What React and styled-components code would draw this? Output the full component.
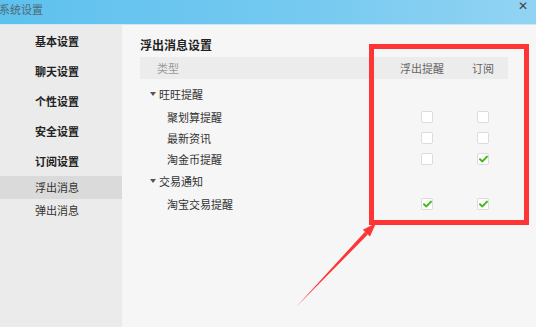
import React from 'react';
import styled, { createGlobalStyle } from 'styled-components';

const Global = createGlobalStyle`
  html, body { margin: 0; padding: 0; }
  body {
    font-family: "Noto Sans CJK SC", "Noto Sans", sans-serif;
    background: #f6f6f6;
  }
`;

const Window = styled.div`
  position: relative;
  width: 536px;
  height: 327px;
  overflow: hidden;
  display: flex;
  flex-direction: column;
  background: #f6f6f6;
`;

const TitleBar = styled.div`
  height: 24px;
  flex: none;
  display: flex;
  align-items: flex-start;
  justify-content: space-between;
  background: linear-gradient(90deg, #5ec1ee 0%, #74c9f0 55%, #92d3f3 100%);
  border-bottom: 1px solid #c9e9f8;
`;

const Title = styled.span`
  font-size: 11px;
  line-height: 18px;
  color: #4e6a7a;
  margin-left: -1px;
`;

const Close = styled.span`
  font-family: "DejaVu Sans", sans-serif;
  font-size: 12px;
  font-weight: bold;
  line-height: 13px;
  color: #444;
  margin-right: 8px;
`;

const Body = styled.div`
  flex: 1;
  display: flex;
`;

const Sidebar = styled.div`
  width: 122px;
  flex: none;
  background: #ebebeb;
  padding-top: 1px;
`;

const NavItem = styled.div`
  height: ${p => (p.$small ? 23 : 30)}px;
  line-height: ${p => (p.$small ? 23 : 30)}px;
  padding-left: 35px;
  font-size: 11px;
  font-weight: ${p => (p.$bold ? 700 : 400)};
  color: ${p => (p.$bold ? '#222' : '#333')};
  background: ${p => (p.$active ? '#dadada' : 'transparent')};
`;

const Main = styled.div`
  flex: 1;
  padding: 11px 28px 0 18px;
`;

const SectionTitle = styled.div`
  font-size: 12px;
  font-weight: 700;
  color: #222;
  line-height: 17px;
  margin-bottom: 4px;
`;

const Row = styled.div`
  display: grid;
  grid-template-columns: 1fr 62px 50px;
  align-items: center;
  height: ${p => p.$h}px;
  margin-top: ${p => p.$mt || 0}px;
`;

const Header = styled(Row)`
  background: #ececec;
  color: #9a9a9a;
  font-size: 11px;
  padding-left: 17px;
`;

const HeadCell = styled.span`
  text-align: center;
  color: #666;
  margin-left: ${p => p.$shift || 0}px;
`;

const Tree = styled.div`
  padding-top: 3px;
`;

const Label = styled.span`
  font-size: 11px;
  color: #333;
  padding-left: ${p => p.$indent}px;
  display: flex;
  align-items: center;
`;

const Caret = styled.span`
  width: 0;
  height: 0;
  border-left: 3px solid transparent;
  border-right: 3px solid transparent;
  border-top: 4px solid #555;
  margin-right: 3px;
  margin-left: -8px;
`;

const Cell = styled.div`
  display: flex;
  justify-content: center;
`;

const Box = styled.span`
  width: 12px;
  height: 12px;
  box-sizing: border-box;
  border: 1px solid #dcdcdc;
  border-radius: 2px;
  background: #fff;
  display: flex;
  align-items: center;
  justify-content: center;
`;

const Highlight = styled.div`
  position: absolute;
  left: 369px;
  top: 44px;
  width: 160px;
  height: 181px;
  box-sizing: border-box;
  border: 5px solid #ff3535;
  pointer-events: none;
`;

const ArrowLayer = styled.svg`
  position: absolute;
  left: 0;
  top: 0;
  pointer-events: none;
`;

const Check = ({ on }) => (
  <Box>
    {on && (
      <svg width="9" height="8" viewBox="0 0 9 8">
        <path d="M1 4.2 L3.4 6.4 L8 1.6" fill="none" stroke="#43b81d" strokeWidth="2" strokeLinecap="round" strokeLinejoin="round" />
      </svg>
    )}
  </Box>
);

const groups = [
  {
    name: '旺旺提醒',
    mt: 0,
    items: [
      { name: '聚划算提醒', a: false, b: false },
      { name: '最新资讯', a: false, b: false },
      { name: '淘金币提醒', a: false, b: true },
    ],
  },
  {
    name: '交易通知',
    mt: 0,
    items: [{ name: '淘宝交易提醒', a: true, b: true }],
  },
];

const nav = [
  { name: '基本设置', bold: true },
  { name: '聊天设置', bold: true },
  { name: '个性设置', bold: true },
  { name: '安全设置', bold: true },
  { name: '订阅设置', bold: true },
  { name: '浮出消息', small: true, active: true },
  { name: '弹出消息', small: true },
];

export default function App() {
  return (
    <Window>
      <Global />
      <TitleBar>
        <Title>系统设置</Title>
        <Close>✕</Close>
      </TitleBar>
      <Body>
        <Sidebar>
          {nav.map(n => (
            <NavItem key={n.name} $bold={n.bold} $small={n.small} $active={n.active}>
              {n.name}
            </NavItem>
          ))}
        </Sidebar>
        <Main>
          <SectionTitle>浮出消息设置</SectionTitle>
          <Header $h={22}>
            <span>类型</span>
            <HeadCell $shift={-10}>浮出提醒</HeadCell>
            <HeadCell>订阅</HeadCell>
          </Header>
          <Tree>
            {groups.map(g => (
              <React.Fragment key={g.name}>
                <Row $h={24} $mt={g.mt}>
                  <Label $indent={18}>
                    <Caret />
                    {g.name}
                  </Label>
                </Row>
                {g.items.map(it => (
                  <Row key={it.name} $h={21}>
                    <Label $indent={27}>{it.name}</Label>
                    <Cell><Check on={it.a} /></Cell>
                    <Cell><Check on={it.b} /></Cell>
                  </Row>
                ))}
              </React.Fragment>
            ))}
          </Tree>
        </Main>
      </Body>
      <Highlight />
      <ArrowLayer width="536" height="327" viewBox="0 0 536 327">
        <polygon points="297.7,305.3 298.3,304.7 367.8,234.6 365,231.8" fill="#ff3535" />
        <polygon points="376,223 370,236.6 362.8,229.8" fill="#ff3535" />
      </ArrowLayer>
    </Window>
  );
}
